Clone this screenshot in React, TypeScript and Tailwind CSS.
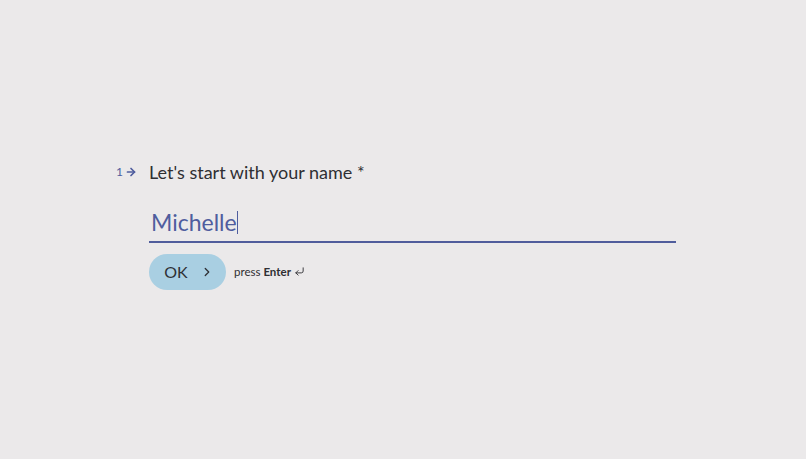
import { ArrowRight, ChevronRight, CornerDownLeft } from "lucide-react"

export default function App() {
    return (
        <div className="w-[806px] h-[459px] bg-[#ebe9ea] overflow-hidden" style={{ fontFamily: "Lato, 'Open Sans', sans-serif" }}>
            <div className="pt-[158px] pl-[149px] w-[676px]">
                {/* Question */}
                <div className="relative">
                    <div className="absolute -left-[33px] top-[5px] flex items-center gap-[2px] text-[#4f5d9e] text-[12px]">
                        <span>1</span>
                        <ArrowRight size={12} strokeWidth={3.4} />
                    </div>
                    <h2 className="text-[18px] leading-[28px] text-[#2f2f33]">Let's start with your name *</h2>
                </div>

                {/* Answer */}
                <div className="mt-[20px] border-b-2 border-[#505d9c] pb-[2px] flex items-center">
                    <span className="text-[23px] leading-[33px] text-[#4f5d9e] pl-[2px]">Michelle</span>
                    <span className="w-[1px] h-[23px] bg-[#4f5d9e]" />
                </div>

                {/* Action */}
                <div className="mt-[11px] flex items-center gap-[8px]">
                    <button className="h-[36px] w-[77px] rounded-full bg-[#a9cfe2] flex items-center justify-center gap-[12px] pl-[3px] text-[#2f3035] text-[16px]">
                        <span>OK</span>
                        <ChevronRight size={14} strokeWidth={2.2} />
                    </button>
                    <div className="flex items-center text-[11.5px] text-[#2f2f33]">
                        <span>press&nbsp;</span>
                        <span className="font-bold">Enter</span>
                        <CornerDownLeft size={11} strokeWidth={2} className="ml-[3px] -mt-[2px]" />
                    </div>
                </div>
            </div>
        </div>
    )
}
